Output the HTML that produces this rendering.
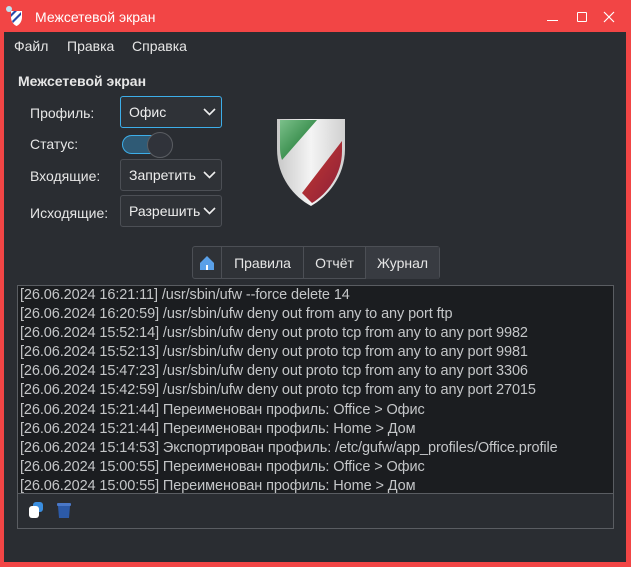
<!DOCTYPE html>
<html><head><meta charset="utf-8"><style>
*{margin:0;padding:0;box-sizing:border-box}
body{width:631px;height:567px;background:#f24545;font-family:"Liberation Sans","Noto Sans CJK SC",sans-serif;position:relative;overflow:hidden;color:#e6e6e6}
.a{position:absolute}
.win{left:4px;top:32px;width:622px;height:530px;background:#2a2d32}
.t{font-size:14px;white-space:nowrap}
.cb{position:absolute;left:120px;width:102px;height:32px;border:1px solid #4c4f55;border-radius:3px;background:#2f3237;font-size:14px;padding:7px 0 0 8px;color:#eee}
.cb svg{position:absolute;right:5px;top:11px}
.log{left:17px;top:285px;width:597px;height:209px;background:#1b1d20;border:1px solid #5a5d62;overflow:hidden;padding:0 0 0 2px}
.log div{font-size:14.5px;line-height:19.1px;color:#c4c6c8;white-space:nowrap;letter-spacing:-0.1px}
.tab{position:absolute;top:0;height:32px;border-right:1px solid #4c4f55;font-size:14px;text-align:center;padding-top:8px}
</style></head><body>
<svg class="a" style="left:6px;top:6px" width="22" height="22" viewBox="0 0 22 22"><circle cx="3" cy="3" r="3" fill="#bfe3f0"/><path d="M5 5h11v6c0 5-3 8-5.5 9C8 19 5 16 5 11z" fill="#fff"/><path d="M6 15L15 6v3l-8 8z" fill="#2848a8"/><path d="M5 11l6-6H8L5 8z" fill="#2848a8"/></svg>
<div class="a t" style="left:35px;top:9px;color:#fff;font-size:14px">Межсетевой экран</div>
<div class="a" style="left:547px;top:20px;width:11px;height:1px;background:#fff"></div>
<div class="a" style="left:577px;top:12px;width:10px;height:10px;border:1px solid #fff;border-radius:1px"></div>
<svg class="a" style="left:603px;top:11px" width="12" height="12"><path d="M1 1L11 11M11 1L1 11" stroke="#fff" stroke-width="1.2"/></svg>
<div class="a win"></div>
<div class="a t" style="left:14px;top:38px">Файл</div>
<div class="a t" style="left:67px;top:38px">Правка</div>
<div class="a t" style="left:132px;top:38px">Справка</div>
<div class="a t" style="left:18px;top:73px;font-weight:bold">Межсетевой экран</div>
<div class="a t" style="left:30px;top:105px">Профиль:</div>
<div class="a t" style="left:30px;top:136px">Статус:</div>
<div class="a t" style="left:30px;top:168px">Входящие:</div>
<div class="a t" style="left:30px;top:205px">Исходящие:</div>
<div class="cb" style="top:96px;border-color:#3daee9">Офис<svg width="13" height="8"><path d="M1 1l5.5 5.5L12 1" stroke="#eee" stroke-width="1.6" fill="none"/></svg></div>
<div class="cb" style="top:159px">Запретить<svg width="13" height="8"><path d="M1 1l5.5 5.5L12 1" stroke="#eee" stroke-width="1.6" fill="none"/></svg></div>
<div class="cb" style="top:195px">Разрешить<svg width="13" height="8"><path d="M1 1l5.5 5.5L12 1" stroke="#eee" stroke-width="1.6" fill="none"/></svg></div>
<div class="a" style="left:122px;top:135px;width:44px;height:19px;border-radius:10px;background:#2f5a75;border:1px solid #3daee9"></div>
<div class="a" style="left:147px;top:132px;width:26px;height:26px;border-radius:50%;background:#30333a;border:1px solid #5a5d62"></div>
<svg class="a" style="left:274px;top:116px" width="74" height="92" viewBox="0 0 74 92"><defs><linearGradient id="g" x1="0" y1="0" x2="1" y2="1"><stop offset="0" stop-color="#7bc08a"/><stop offset="1" stop-color="#0b6a22"/></linearGradient><linearGradient id="r" x1="0" y1="0" x2="1" y2="1"><stop offset="0" stop-color="#c83a30"/><stop offset="1" stop-color="#8a1f3a"/></linearGradient><linearGradient id="w" x1="0" y1="0" x2="1" y2="0"><stop offset="0" stop-color="#c8c8c8"/><stop offset=".5" stop-color="#f4f4f4"/><stop offset="1" stop-color="#d0d0d0"/></linearGradient></defs><path d="M3 3h68v30c0 28-18 48-34 57C20 81 3 61 3 33z" fill="url(#w)"/><path d="M6 4h37L8 44C6 38 6 34 6 30z" fill="url(#g)"/><path d="M68 25v10c0 24-15 43-30 52l-10-10z" fill="url(#r)"/></svg>
<div class="a" style="left:192px;top:246px;width:248px;height:33px;border:1px solid #4c4f55;border-radius:3px;background:#2f3237">
<div class="tab" style="left:0;width:29px"><svg width="16" height="16"><path d="M1 8L8 1l7 7v7H1z" fill="#5aa0e8"/><rect x="7" y="10" width="2" height="5" fill="#fff"/></svg></div>
<div class="tab" style="left:29px;width:82px">Правила</div>
<div class="tab" style="left:111px;width:62px">Отчёт</div>
<div class="tab" style="left:173px;width:73px;border:none;background:#383b41">Журнал</div>
</div>
<div class="a log">
<div>[26.06.2024 16:21:11] /usr/sbin/ufw --force delete 14</div>
<div>[26.06.2024 16:20:59] /usr/sbin/ufw deny out from any to any port ftp</div>
<div>[26.06.2024 15:52:14] /usr/sbin/ufw deny out proto tcp from any to any port 9982</div>
<div>[26.06.2024 15:52:13] /usr/sbin/ufw deny out proto tcp from any to any port 9981</div>
<div>[26.06.2024 15:47:23] /usr/sbin/ufw deny out proto tcp from any to any port 3306</div>
<div>[26.06.2024 15:42:59] /usr/sbin/ufw deny out proto tcp from any to any port 27015</div>
<div>[26.06.2024 15:21:44] Переименован профиль: Office &gt; Офис</div>
<div>[26.06.2024 15:21:44] Переименован профиль: Home &gt; Дом</div>
<div>[26.06.2024 15:14:53] Экспортирован профиль: /etc/gufw/app_profiles/Office.profile</div>
<div>[26.06.2024 15:00:55] Переименован профиль: Office &gt; Офис</div>
<div>[26.06.2024 15:00:55] Переименован профиль: Home &gt; Дом</div>
</div>
<div class="a" style="left:17px;top:493px;width:597px;height:36px;border:1px solid #5a5d62;border-top:none"></div>
<div class="a" style="left:33px;top:502px;width:10px;height:10px;border-radius:3px;background:#3a8ee0"></div>
<div class="a" style="left:29px;top:506px;width:10px;height:12px;border-radius:3px;background:#fff"></div>
<svg class="a" style="left:57px;top:503px" width="14" height="16"><rect x="0" y="0" width="14" height="3" rx="1" fill="#4a78c8"/><path d="M1 3h12l-1 12H2z" fill="#2c5aa8"/></svg>
</body></html>
